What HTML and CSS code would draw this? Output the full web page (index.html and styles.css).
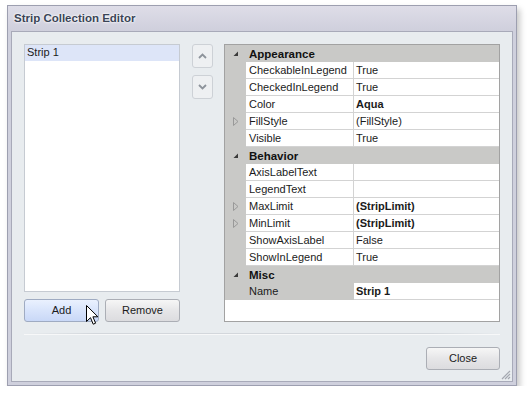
FILE: index.html
```html
<!DOCTYPE html>
<html>
<head>
<meta charset="utf-8">
<link rel="stylesheet" href="styles.css">
</head>
<body>
<div class="window">
  <div class="titlebar">Strip Collection Editor</div>
  <div class="client">
    <div class="top">
      <div class="leftcol">
        <div class="listbox">
          <div class="item selected">Strip 1</div>
        </div>
        <div class="btnrow">
          <div class="btn hover">Add</div>
          <div class="btn">Remove</div>
        </div>
      </div>
      <div class="arrows">
        <div class="arrowbtn"><svg width="9" height="6" viewBox="0 0 9 6"><path d="M1 5 L4.5 1.5 L8 5" fill="none" stroke="#8d939b" stroke-width="1.8"/></svg></div>
        <div class="arrowbtn"><svg width="9" height="6" viewBox="0 0 9 6"><path d="M1 1 L4.5 4.5 L8 1" fill="none" stroke="#8d939b" stroke-width="1.8"/></svg></div>
      </div>
      <div class="pgrid">
        <div class="cat"><span class="exp"><svg width="6" height="6" viewBox="0 0 6 6"><path d="M5 0.5 L5 5 L0.5 5 Z" fill="#3a3a3a"/></svg></span><span class="cattext">Appearance</span></div>
        <div class="row"><span class="m"></span><span class="n">CheckableInLegend</span><span class="v">True</span></div>
        <div class="row"><span class="m"></span><span class="n">CheckedInLegend</span><span class="v">True</span></div>
        <div class="row"><span class="m"></span><span class="n">Color</span><span class="v b">Aqua</span></div>
        <div class="row"><span class="m"><svg width="6" height="9" viewBox="0 0 6 9"><path d="M0.5 0.5 L5 4.5 L0.5 8.5 Z" fill="none" stroke="#999" stroke-width="1"/></svg></span><span class="n">FillStyle</span><span class="v">(FillStyle)</span></div>
        <div class="row"><span class="m"></span><span class="n">Visible</span><span class="v">True</span></div>
        <div class="cat"><span class="exp"><svg width="6" height="6" viewBox="0 0 6 6"><path d="M5 0.5 L5 5 L0.5 5 Z" fill="#3a3a3a"/></svg></span><span class="cattext">Behavior</span></div>
        <div class="row"><span class="m"></span><span class="n">AxisLabelText</span><span class="v"></span></div>
        <div class="row"><span class="m"></span><span class="n">LegendText</span><span class="v"></span></div>
        <div class="row"><span class="m"><svg width="6" height="9" viewBox="0 0 6 9"><path d="M0.5 0.5 L5 4.5 L0.5 8.5 Z" fill="none" stroke="#999" stroke-width="1"/></svg></span><span class="n">MaxLimit</span><span class="v b">(StripLimit)</span></div>
        <div class="row"><span class="m"><svg width="6" height="9" viewBox="0 0 6 9"><path d="M0.5 0.5 L5 4.5 L0.5 8.5 Z" fill="none" stroke="#999" stroke-width="1"/></svg></span><span class="n">MinLimit</span><span class="v b">(StripLimit)</span></div>
        <div class="row"><span class="m"></span><span class="n">ShowAxisLabel</span><span class="v">False</span></div>
        <div class="row"><span class="m"></span><span class="n">ShowInLegend</span><span class="v">True</span></div>
        <div class="cat"><span class="exp"><svg width="6" height="6" viewBox="0 0 6 6"><path d="M5 0.5 L5 5 L0.5 5 Z" fill="#3a3a3a"/></svg></span><span class="cattext">Misc</span></div>
        <div class="row sel"><span class="m"></span><span class="n">Name</span><span class="v b">Strip 1</span></div>
      </div>
    </div>
    <div class="sep"></div>
    <div class="bottom">
      <div class="btn close">Close</div>
    </div>
    <svg class="grip" width="11" height="11" viewBox="0 0 11 11"><path d="M10 2 L2 10 M10 5 L5 10 M10 8 L8 10" stroke="#a4a8b0" stroke-width="1.2"/></svg>
  </div>
  <svg class="cursor" width="13" height="21" viewBox="0 0 13 21"><path d="M0.5 0.5 L0.5 16.5 L4.5 12.7 L7.2 19.2 L9.6 18.2 L6.9 11.8 L11.9 11.8 Z" fill="#fff" stroke="#000" stroke-width="1" stroke-linejoin="miter"/></svg>
</div>
</body>
</html>
```

FILE: styles.css
```css
html, body {
  margin: 0;
  padding: 0;
  background: #ffffff;
}
body {
  font-family: "Liberation Sans", Arial, sans-serif;
  font-size: 11px;
  color: #1b1b1b;
}
.window {
  position: relative;
  margin: 5px 0 0 7px;
  width: 510px;
  height: 381px;
  box-sizing: border-box;
  border: 1px solid #9d9fb0;
  padding: 0 3px 3px 3px;
  display: flex;
  flex-direction: column;
  background: #cfd0dd;
  box-shadow: 3px 4px 6px rgba(0,0,0,0.22);
}
.titlebar {
  margin: 0 -3px;
  height: 25px;
  padding-left: 6px;
  background: linear-gradient(#dedde8, #cfcfdc);
  font-family: "Liberation Sans", Arial, sans-serif;
  font-weight: bold;
  font-size: 11.5px;
  line-height: 25px;
  color: #3a4456;
  text-shadow: 0 0 3px #ffffff, 0 0 2px #ffffff;
}
.client {
  position: relative;
  flex: 1;
  border: 1px solid #a8aab9;
  background: #e8ecef;
  padding: 12px 12px 0 12px;
  display: flex;
  flex-direction: column;
}
.top {
  display: flex;
  height: 278px;
}
.leftcol {
  width: 156px;
  display: flex;
  flex-direction: column;
  gap: 7px;
}
.listbox {
  height: 248px;
  box-sizing: border-box;
  border: 1px solid #c6cbd2;
  background: #ffffff;
}
.item {
  height: 16px;
  line-height: 15px;
  padding-left: 2px;
}
.item.selected {
  background: #dde5f8;
}
.btnrow {
  display: flex;
  gap: 6px;
}
.btn {
  width: 75px;
  height: 23px;
  box-sizing: border-box;
  border: 1px solid #abaeb5;
  border-radius: 3px;
  background: linear-gradient(#f6f6f6, #e6e6e8 50%, #dcdcdf);
  text-align: center;
  line-height: 21px;
  font-size: 11px;
  color: #1b1b1b;
}
.btn.hover {
  border-color: #9fabc2;
  background: linear-gradient(#eaf1fe, #d8e4fb 50%, #c9d8f7);
}
.arrows {
  margin-left: 12px;
  width: 21px;
  display: flex;
  flex-direction: column;
  gap: 7px;
}
.arrowbtn {
  height: 24px;
  box-sizing: border-box;
  border: 1px solid #cdd1d6;
  border-radius: 3px;
  background: #eef0f2;
  display: flex;
  align-items: center;
  justify-content: center;
}
.pgrid {
  margin-left: 11px;
  flex: 1;
  height: 278px;
  box-sizing: border-box;
  border: 1px solid #a2a2a2;
  background: #ffffff;
}
.cat {
  height: 17px;
  background: #c9c9c7;
  display: flex;
  align-items: center;
}
.exp {
  width: 21px;
  display: flex;
  justify-content: center;
  align-items: center;
  padding-left: 1px;
  box-sizing: border-box;
}
.cattext {
  padding-left: 3px;
  font-weight: bold;
  font-size: 11.5px;
  color: #111;
}
.row {
  display: grid;
  grid-template-columns: 21px 108px 1fr;
  height: 17px;
}
.m {
  background: #c9c9c7;
  display: flex;
  align-items: center;
  justify-content: center;
}
.n, .v {
  box-sizing: border-box;
  border-bottom: 1px solid #d3d3d3;
  line-height: 16px;
  white-space: nowrap;
  overflow: hidden;
}
.n {
  padding-left: 3px;
  border-right: 1px solid #d3d3d3;
}
.v {
  padding-left: 2px;
}
.b {
  font-weight: bold;
}
.row.sel .n {
  background: #c9c9c7;
  border-color: #c9c9c7;
}
.sep {
  margin-top: 11px;
  height: 1px;
  background: linear-gradient(90deg, rgba(210,214,219,0), #d3d7dc 15%, #d3d7dc 85%, rgba(210,214,219,0));
  border-bottom: 1px solid #f7f8f9;
}
.bottom {
  margin-top: 12px;
  display: flex;
  justify-content: flex-end;
}
.btn.close {
  width: 74px;
  height: 23px;
}
.grip {
  position: absolute;
  right: 1px;
  bottom: 1px;
}
.cursor {
  position: absolute;
  left: 78px;
  top: 299px;
}
```
